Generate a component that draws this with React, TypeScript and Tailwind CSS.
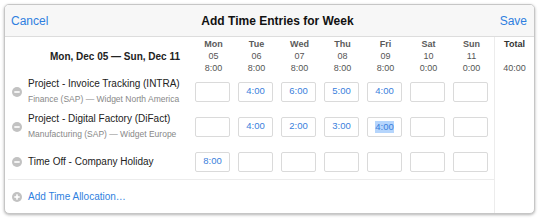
import React from 'react';

// Weekly time entry sheet (modal style)

interface Day {
  name: string;
  date: string;
  hours: string;
}

interface EntryRow {
  title: string;
  subtitle?: string;
  values: string[];
  selected?: number;
}

const DAYS: Day[] = [
  { name: 'Mon', date: '05', hours: '8:00' },
  { name: 'Tue', date: '06', hours: '8:00' },
  { name: 'Wed', date: '07', hours: '8:00' },
  { name: 'Thu', date: '08', hours: '8:00' },
  { name: 'Fri', date: '09', hours: '8:00' },
  { name: 'Sat', date: '10', hours: '0:00' },
  { name: 'Sun', date: '11', hours: '0:00' },
];

const ROWS: EntryRow[] = [
  {
    title: 'Project - Invoice Tracking (INTRA)',
    subtitle: 'Finance (SAP) — Widget North America',
    values: ['', '4:00', '6:00', '5:00', '4:00', '', ''],
  },
  {
    title: 'Project - Digital Factory (DiFact)',
    subtitle: 'Manufacturing (SAP) — Widget Europe',
    values: ['', '4:00', '2:00', '3:00', '4:00', '', ''],
    selected: 4,
  },
  {
    title: 'Time Off - Company Holiday',
    values: ['8:00', '', '', '', '', '', ''],
  },
];

const MinusIcon = () => (
  <svg width="10" height="10" viewBox="0 0 10 10" className="shrink-0">
    <circle cx="5" cy="5" r="5" fill="#c2c2c2" />
    <rect x="2.3" y="4.2" width="5.4" height="1.6" fill="#ffffff" />
  </svg>
);

const PlusIcon = () => (
  <svg width="10" height="10" viewBox="0 0 10 10" className="shrink-0">
    <circle cx="5" cy="5" r="5" fill="#c2c2c2" />
    <rect x="2.3" y="4.2" width="5.4" height="1.6" fill="#ffffff" />
    <rect x="4.2" y="2.3" width="1.6" height="5.4" fill="#ffffff" />
  </svg>
);

const HourBox: React.FC<{ value: string; selected?: boolean }> = ({ value, selected }) => (
  <div className="w-[43px] flex justify-center">
    <div className="w-[35px] h-[20px] border border-[#dadada] rounded-[2px] bg-white flex items-center justify-center text-[9.5px] text-[#3a80dc]">
      {selected ? <span className="bg-[#b5d5fc] leading-[12px]">{value}</span> : value}
    </div>
  </div>
);

export default function App() {
  return (
    <div className="w-[540px] h-[219px] bg-white pt-[4px] pl-[4px] font-['Liberation_Sans',Arial,sans-serif]">
      <div className="w-[531px] h-[210px] border border-[#c6c6c6] rounded-[5px] shadow-[0_1px_3px_rgba(0,0,0,0.3)] bg-white overflow-hidden flex flex-col">
        {/* title bar */}
        <div className="h-[32px] shrink-0 bg-[#f7f7f7] border-b border-[#dddddd] flex items-center pl-[6px] pr-[7px] text-[12px]">
          <span className="text-[#2f7fe0]">Cancel</span>
          <span className="flex-1 text-center pl-[7px] font-bold text-[#111]">Add Time Entries for Week</span>
          <span className="text-[#2f7fe0]">Save</span>
        </div>

        <div className="flex flex-1">
          {/* entries */}
          <div className="w-[489px] flex flex-col">
            <div className="h-[37px] pt-[1px] flex">
              <div className="w-[186px] h-[36px] flex items-center justify-end pr-[11px] text-[10px] font-bold text-[#222]">
                Mon, Dec 05 — Sun, Dec 11
              </div>
              {DAYS.map((d) => (
                <div key={d.name} className="w-[43px] pl-[2px] text-center text-[9px] leading-[12px] text-[#555]">
                  <div className="font-bold text-[#5a5a5a]">{d.name}</div>
                  <div>{d.date}</div>
                  <div>{d.hours}</div>
                </div>
              ))}
            </div>

            {ROWS.map((row) => (
              <div key={row.title} className="h-[35px] flex items-center">
                <div className="w-[186px] flex items-center gap-[6px] pl-[7px]">
                  <MinusIcon />
                  <div className="min-w-0">
                    <div className="text-[10px] leading-[13px] text-[#222] whitespace-nowrap">{row.title}</div>
                    {row.subtitle && (
                      <div className="mt-[3px] text-[8.5px] leading-[13px] text-[#888] whitespace-nowrap">{row.subtitle}</div>
                    )}
                  </div>
                </div>
                {row.values.map((v, i) => (
                  <HourBox key={i} value={v} selected={row.selected === i} />
                ))}
              </div>
            ))}

            <div className="ml-[3px] border-t border-[#ececec] flex-1 flex items-center gap-[6px] pl-[4px]">
              <PlusIcon />
              <span className="text-[10px] text-[#2f7fe0]">Add Time Allocation…</span>
            </div>
          </div>

          {/* total column */}
          <div className="flex-1 border-l border-[#ececec] pt-[1px] text-center text-[9px] leading-[12px] text-[#555]">
            <div className="font-bold text-[#333]">Total</div>
            <div>&nbsp;</div>
            <div>40:00</div>
          </div>
        </div>
      </div>
    </div>
  );
}
